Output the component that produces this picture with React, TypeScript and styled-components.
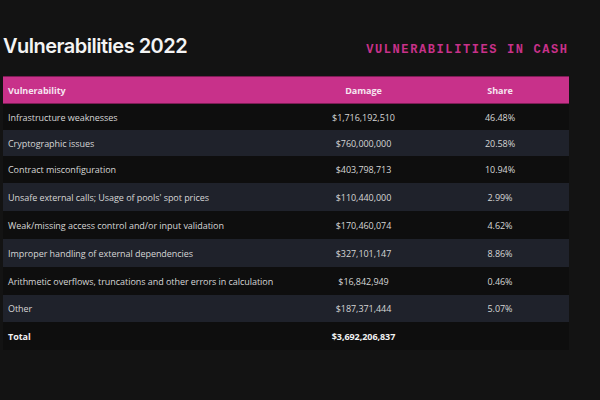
import React from "react";
import styled, { createGlobalStyle } from "styled-components";

const Global = createGlobalStyle`
  html, body { margin: 0; padding: 0; background: #131313; }
  body { width: 600px; height: 400px; overflow: hidden; }
`;

const Page = styled.div`
  width: 600px;
  height: 400px;
  background: #131313;
  padding: 0 31px 0 3px;
  box-sizing: border-box;
  display: flex;
  flex-direction: column;
`;

const TitleBar = styled.div`
  display: flex;
  justify-content: space-between;
  align-items: baseline;
  height: 76px;
  padding-top: 34px;
  box-sizing: border-box;
  padding-right: 2px;
`;

const Title = styled.h1`
  margin: 0;
  font-family: Inter, "Noto Sans", sans-serif;
  font-weight: 600;
  font-size: 20px;
  letter-spacing: -0.5px;
  color: #f4f4f4;
`;

const Kicker = styled.div`
  font-family: "Liberation Mono", "DejaVu Sans Mono", monospace;
  font-weight: 700;
  font-size: 12px;
  letter-spacing: 1.6px;
  color: #c8318a;
  margin-right: -1.6px;
`;

const Table = styled.div`
  display: grid;
  grid-template-columns: 293px 135px 138px;
  font-family: "Open Sans", "Noto Sans", sans-serif;
  font-size: 9px;
  letter-spacing: -0.05px;
`;

type Tone = "head" | "dark" | "light" | "total";

const Row = styled.div<{ $h: number; $tone: Tone }>`
  display: contents;
  & > div {
    height: ${(p) => p.$h}px;
    background: ${(p) =>
      p.$tone === "head" ? "#c8318a" : p.$tone === "light" ? "#1f222b" : "#0e0e0e"};
    color: ${(p) => (p.$tone === "head" ? "#f6e6f0" : p.$tone === "total" ? "#f2f2f2" : "#d6d6d6")};
    font-weight: ${(p) => (p.$tone === "head" || p.$tone === "total" ? 700 : 400)};
    ${(p) =>
      p.$tone === "head" ? "border-top: 1px solid #7d1d56; border-bottom: 1px solid #7d1d56;" : ""}
    box-sizing: border-box;
  }
`;

const Cell = styled.div<{ $align?: "left" | "center" }>`
  display: flex;
  align-items: center;
  justify-content: ${(p) => (p.$align === "left" ? "flex-start" : "center")};
  padding-left: ${(p) => (p.$align === "left" ? "5px" : "0")};
  white-space: nowrap;
`;

const rows: [string, string, string, number][] = [
  ["Infrastructure weaknesses", "$1,716,192,510", "46.48%", 26],
  ["Cryptographic issues", "$760,000,000", "20.58%", 26],
  ["Contract misconfiguration", "$403,798,713", "10.94%", 27],
  ["Unsafe external calls; Usage of pools' spot prices", "$110,440,000", "2.99%", 28],
  ["Weak/missing access control and/or input validation", "$170,460,074", "4.62%", 28],
  ["Improper handling of external dependencies", "$327,101,147", "8.86%", 28],
  ["Arithmetic overflows, truncations and other errors in calculation", "$16,842,949", "0.46%", 28],
  ["Other", "$187,371,444", "5.07%", 27],
];

export default function App() {
  return (
    <>
      <Global />
      <Page>
        <TitleBar>
          <Title>Vulnerabilities 2022</Title>
          <Kicker>VULNERABILITIES IN CASH</Kicker>
        </TitleBar>
        <Table>
          <Row $h={28} $tone="head">
            <Cell $align="left">Vulnerability</Cell>
            <Cell>Damage</Cell>
            <Cell>Share</Cell>
          </Row>
          {rows.map(([v, d, s, h], i) => (
            <Row key={v} $h={h} $tone={i % 2 === 0 ? "dark" : "light"}>
              <Cell $align="left">{v}</Cell>
              <Cell>{d}</Cell>
              <Cell>{s}</Cell>
            </Row>
          ))}
          <Row $h={28} $tone="total">
            <Cell $align="left">Total</Cell>
            <Cell>$3,692,206,837</Cell>
            <Cell></Cell>
          </Row>
        </Table>
      </Page>
    </>
  );
}
